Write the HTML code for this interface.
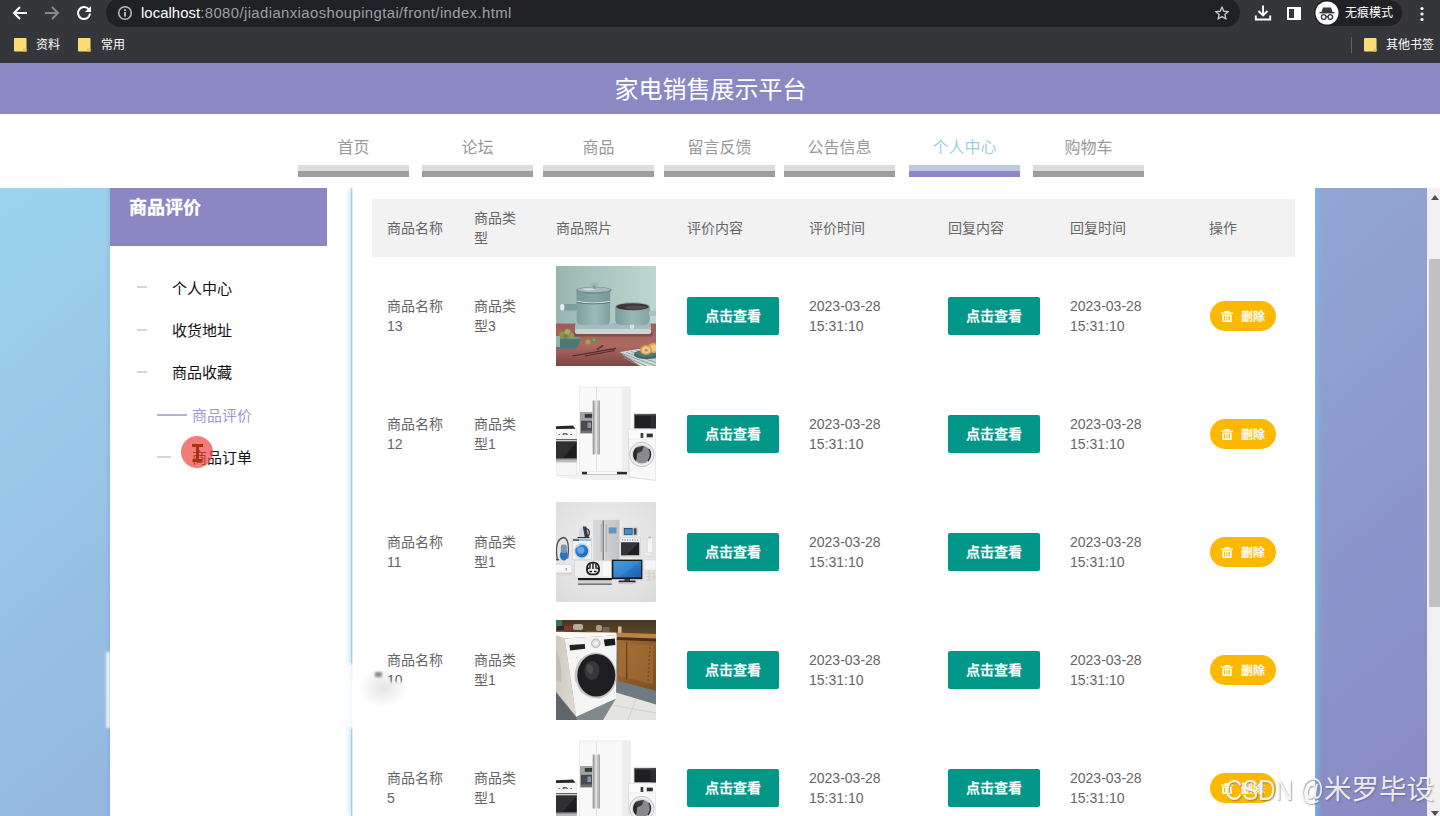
<!DOCTYPE html>
<html lang="zh-CN"><head><meta charset="utf-8"><title>家电销售展示平台</title>
<style>
*{box-sizing:border-box;margin:0;padding:0}
html,body{width:1440px;height:816px;overflow:hidden;background:#fff}
body{position:relative;font-family:"Liberation Sans","Noto Sans CJK SC",sans-serif;color:#666;font-size:14px}
.abs{position:absolute}
/* browser chrome */
#chrome{position:absolute;left:0;top:0;width:1440px;height:63px;background:#35363a;color:#fff}
#pill{position:absolute;left:106px;top:-2px;width:1134px;height:29px;border-radius:15px;background:#202124}
#url{position:absolute;left:141px;top:3px;height:20px;line-height:20px;font-size:14.9px;color:#9aa0a6;white-space:nowrap;letter-spacing:0px}
#url b{font-weight:normal;color:#fff;letter-spacing:0.05px}
#url i{font-style:normal;letter-spacing:0.39px}
.bm{position:absolute;top:36px;height:18px;line-height:18px;font-size:12px;color:#fff;white-space:nowrap}
#incog{position:absolute;left:1314px;top:0px;width:88px;height:26px;border-radius:13px;background:#202124}
#incog span{position:absolute;left:31px;top:4px;height:18px;line-height:18px;font-size:12px;color:#fff;white-space:nowrap}
/* header */
#hdr{position:absolute;left:0;top:63px;width:1440px;height:51px;background:#8a89c3;color:#fff;font-size:24px;line-height:51px;text-align:center}
#hdr span{position:absolute;left:614px;top:1px;width:193px;white-space:nowrap}
/* nav */
.nav{position:absolute;top:135px;width:111px;height:26px;line-height:26px;text-align:center;font-size:16px;color:#999;white-space:nowrap}
.bar{position:absolute;top:165px;width:111px;height:12px;background:linear-gradient(#dcdcdc 0,#dcdcdc 50%,#9e9e9e 50%,#9e9e9e 100%)}
.bar.on{background:linear-gradient(#bccadd 0,#bccadd 50%,#8c88c9 50%,#8c88c9 100%)}
/* frame */
#frame{position:absolute;left:0;top:188px;width:1427px;height:628px;background:linear-gradient(140deg,#9cd4ee,#8989c4);overflow:hidden}
#main{position:absolute;left:110px;top:0;width:1205px;height:628px;background:#fff}
#content{position:absolute;left:241px;top:0;width:964px;height:628px;border-left:1px solid #a3d1f1;box-shadow:-3px 0 4px -1px rgba(150,205,240,.5),inset 1px 0 0 rgba(163,209,241,.4)}
#sidehead{position:absolute;left:0;top:0;width:217px;-webkit-text-stroke:.3px #fff;height:58px;background:#8a87c2;color:#fff;font-weight:bold;font-size:18px;line-height:24px;padding:8px 0 0 19px}
.mi{position:absolute;left:62px;height:22px;line-height:22px;font-size:15px;color:#111;white-space:nowrap}
.dash{position:absolute;height:2px;background:#d6d6d6}
/* scrollbar */
#sb{position:absolute;left:1427px;top:188px;width:13px;height:628px;background:#f1f1f1}
#sb i{position:absolute;left:2px;top:71px;width:11px;height:348px;background:#c1c1c1}
/* table */
#th{position:absolute;left:372px;top:199px;width:923px;height:58px;background:#f2f2f2}
.t{position:absolute;line-height:20px;font-size:14px;color:#666;white-space:nowrap}
.btn{position:absolute;width:92px;height:38px;border-radius:2px;background:#009688;color:#fff;font-size:14px;text-align:center;font-weight:500;-webkit-text-stroke:.3px #fff;line-height:39px}
.del{position:absolute;width:66px;height:30px;border-radius:15px;background:#ffb800;color:#fff;font-size:12px;font-weight:bold;line-height:30px}
.del span{position:absolute;left:31px;top:1px}
.del svg{position:absolute;left:11px;top:10px}
.img{position:absolute;left:556px;width:100px;height:100px;overflow:hidden}
#wm{position:absolute;left:1225px;top:772px;font-size:27.5px;line-height:36px;color:rgba(255,255,255,.86);white-space:nowrap;text-shadow:1px 1px 1.5px rgba(90,90,100,.6)}
#wm b{font-weight:normal;display:inline-block;font-size:30px;transform-origin:0 50%;transform:scaleX(.8);width:99px;vertical-align:top}
#cursor{position:absolute;left:181px;top:436px;width:32px;height:32px;border-radius:16px;background:rgba(238,72,72,.72)}
#smudge{position:absolute;left:352px;top:682px;width:54px;height:46px;background:#fff;filter:blur(1.5px)}
#smudge2{position:absolute;left:358px;top:668px;width:50px;height:40px;background:radial-gradient(closest-side,rgba(0,0,0,.10),rgba(0,0,0,0))}
#smudge3{position:absolute;left:375px;top:672px;width:7px;height:5px;background:#8c8c8c;filter:blur(1px)}
#smudge4{position:absolute;left:346px;top:664px;width:8px;height:64px;background:rgba(255,255,255,.75);filter:blur(1px)}
#smudge5{position:absolute;left:106px;top:652px;width:4px;height:76px;background:rgba(255,255,255,.8);filter:blur(1px)}
</style></head>
<body>
<div id="chrome">
<div id="pill"></div>
<svg class="abs" style="left:12px;top:5px" width="16" height="16" viewBox="0 0 16 16"><path d="M15 8 H2.500 M8 2 L2 8 L8 14" fill="none" stroke="#fff" stroke-width="2" stroke-linecap="butt"/></svg>
<svg class="abs" style="left:44px;top:5px" width="16" height="16" viewBox="0 0 16 16"><path d="M1 8 H13.500 M8 2 L14 8 L8 14" fill="none" stroke="#88898c" stroke-width="2"/></svg>
<svg class="abs" style="left:76px;top:5px" width="16" height="16" viewBox="0 0 16 16"><path d="M13.300 5.200 A6 6 0 1 0 14 8.500" fill="none" stroke="#fff" stroke-width="2"/><path d="M15 1 V7 H9z" fill="#fff"/></svg>
<svg class="abs" style="left:117px;top:5px" width="16" height="16" viewBox="0 0 16 16"><circle cx="8" cy="8" r="6.300" fill="none" stroke="#b4b8bd" stroke-width="1.600"/><rect x="7.100" y="7" width="1.800" height="4.600" fill="#c4c7cb"/><rect x="7.100" y="4.200" width="1.800" height="1.800" fill="#c4c7cb"/></svg>
<div id="url"><b>localhost</b><i>:8080/jiadianxiaoshoupingtai/front/index.html</i></div>
<svg class="abs" style="left:1214px;top:5px" width="16" height="16" viewBox="0 0 18 18"><path d="M9 2.200 L11 7 L16.200 7.400 L12.200 10.800 L13.500 15.800 L9 13.100 L4.500 15.800 L5.800 10.800 L1.800 7.400 L7 7z" fill="none" stroke="#c9cbce" stroke-width="1.500" stroke-linejoin="round"/></svg>
<svg class="abs" style="left:1254px;top:4px" width="18" height="18" viewBox="0 0 18 18"><path d="M9 1.500 V11 M4.500 7 L9 11.500 L13.500 7 M1.800 11.500 V15.500 H16.200 V11.500" fill="none" stroke="#fff" stroke-width="1.900"/></svg>
<svg class="abs" style="left:1287px;top:7px" width="14" height="13" viewBox="0 0 14 13"><rect x="1" y="1" width="12" height="11" fill="#35363a" stroke="#fff" stroke-width="2"/><rect x="7" y="1" width="6" height="11" fill="#fff"/></svg>
<div id="incog"><svg class="abs" style="left:1px;top:1px" width="24" height="24" viewBox="0 0 24 24"><circle cx="12" cy="12" r="11.500" fill="#fff"/><path d="M8 6.500 h8 l1.500 4.500 h-11z" fill="#35363a"/><rect x="4.500" y="11" width="15" height="1.400" fill="#35363a"/><circle cx="8.700" cy="16" r="2.300" fill="none" stroke="#35363a" stroke-width="1.300"/><circle cx="15.300" cy="16" r="2.300" fill="none" stroke="#35363a" stroke-width="1.300"/><path d="M11 15.700 h2" stroke="#35363a" stroke-width="1.200"/></svg><span>无痕模式</span></div>
<svg class="abs" style="left:1419px;top:6px" width="6" height="16" viewBox="0 0 6 16"><circle cx="3" cy="2.500" r="1.600" fill="#fff"/><circle cx="3" cy="8" r="1.600" fill="#fff"/><circle cx="3" cy="13.500" r="1.600" fill="#fff"/></svg>
<svg class="abs" style="left:14px;top:38px" width="13" height="14" viewBox="0 0 13 14"><path d="M1 0 H11.500 Q12.500 0 12.500 1 V13.500 H1 Q0 13.500 0 12.500 V1 Q0 0 1 0z" fill="#fbdd78"/><path d="M9 13.500 V10.500 H12.500 V13.500z" fill="#e9c659"/></svg><div class="bm" style="left:36px">资料</div>
<svg class="abs" style="left:78px;top:38px" width="13" height="14" viewBox="0 0 13 14"><path d="M1 0 H11.500 Q12.500 0 12.500 1 V13.500 H1 Q0 13.500 0 12.500 V1 Q0 0 1 0z" fill="#fbdd78"/><path d="M9 13.500 V10.500 H12.500 V13.500z" fill="#e9c659"/></svg><div class="bm" style="left:101px">常用</div>
<div class="abs" style="left:1351px;top:37px;width:1px;height:16px;background:#5f6368"></div>
<svg class="abs" style="left:1364px;top:38px" width="13" height="14" viewBox="0 0 13 14"><path d="M1 0 H11.500 Q12.500 0 12.500 1 V13.500 H1 Q0 13.500 0 12.500 V1 Q0 0 1 0z" fill="#fbdd78"/><path d="M9 13.500 V10.500 H12.500 V13.500z" fill="#e9c659"/></svg><div class="bm" style="left:1386px">其他书签</div>
</div>
<div id="hdr"><span>家电销售展示平台</span></div>
<div class="nav" style="left:298px">首页</div><div class="bar" style="left:298px"></div>
<div class="nav" style="left:422px">论坛</div><div class="bar" style="left:422px"></div>
<div class="nav" style="left:543px">商品</div><div class="bar" style="left:543px"></div>
<div class="nav" style="left:664px">留言反馈</div><div class="bar" style="left:664px"></div>
<div class="nav" style="left:784px">公告信息</div><div class="bar" style="left:784px"></div>
<div class="nav" style="left:909px;color:#9dcfe9">个人中心</div><div class="bar on" style="left:909px"></div>
<div class="nav" style="left:1033px">购物车</div><div class="bar" style="left:1033px"></div>
<div id="frame"><div id="main">
<div id="sidehead">商品评价</div>
<div class="dash" style="left:27px;top:98px;width:10px"></div><div class="mi" style="top:90px">个人中心</div>
<div class="dash" style="left:27px;top:141px;width:10px"></div><div class="mi" style="top:132px">收货地址</div>
<div class="dash" style="left:27px;top:183px;width:10px"></div><div class="mi" style="top:174px">商品收藏</div>
<div class="dash" style="left:47px;top:226px;width:30px;height:2px;background:#b4b1db"></div><div class="mi" style="left:82px;top:217px;color:#9c9ad0">商品评价</div>
<div class="dash" style="left:47px;top:268px;width:14px"></div><div class="mi" style="left:82px;top:259px">商品订单</div>
<div id="content"></div>
<div class="abs" style="left:1205px;top:0;width:7px;height:628px;background:linear-gradient(to right,rgba(118,186,236,.85),rgba(118,186,236,.35) 45%,rgba(118,186,236,0))"></div><div class="abs" style="left:-5px;top:0;width:5px;height:628px;background:linear-gradient(to right,rgba(70,120,160,0),rgba(70,120,160,.13))"></div>
</div></div>
<div id="sb"><i></i><svg class="abs" style="left:4px;top:7px" width="8" height="5" viewBox="0 0 8 5"><path d="M0 5 L4 0 L8 5z" fill="#505050"/></svg><svg class="abs" style="left:4px;top:623px" width="8" height="5" viewBox="0 0 8 5"><path d="M0 0 L4 5 L8 0z" fill="#505050"/></svg></div>
<div id="th"></div>
<div class="t" style="left:387px;top:218px">商品名称</div>
<div class="t" style="left:474px;top:208px">商品类<br>型</div>
<div class="t" style="left:556px;top:218px">商品照片</div>
<div class="t" style="left:687px;top:218px">评价内容</div>
<div class="t" style="left:809px;top:218px">评价时间</div>
<div class="t" style="left:948px;top:218px">回复内容</div>
<div class="t" style="left:1070px;top:218px">回复时间</div>
<div class="t" style="left:1209px;top:218px">操作</div>
<div class="t" style="left:387px;top:296px">商品名称<br>13</div><div class="t" style="left:474px;top:296px">商品类<br>型3</div><div class="img" style="top:266px"><svg viewBox="0 0 100 100" width="100" height="100">
<defs><linearGradient id="g1a" x1="0" x2="1"><stop offset="0" stop-color="#97b4af"/><stop offset=".25" stop-color="#a3c0ba"/><stop offset="1" stop-color="#bed6d0"/></linearGradient>
<linearGradient id="g1b" x1="0" x2="0" y1="0" y2="1"><stop offset="0" stop-color="#9d5b55"/><stop offset=".5" stop-color="#ae6a61"/><stop offset="1" stop-color="#7d4541"/></linearGradient>
<linearGradient id="g1c" x1="0" x2="1"><stop offset="0" stop-color="#7f9fa0"/><stop offset=".55" stop-color="#9bbab8"/><stop offset="1" stop-color="#7f9e9f"/></linearGradient>
<linearGradient id="g1d" x1="0" x2="1"><stop offset="0" stop-color="#7b9a9b"/><stop offset=".5" stop-color="#98b7b5"/><stop offset="1" stop-color="#84a3a3"/></linearGradient></defs>
<rect width="100" height="100" fill="url(#g1a)"/>
<rect y="57.600" width="100" height="42.400" fill="url(#g1b)"/>
<rect x="17" y="66" width="80" height="4.500" rx="2" fill="#7a423e" opacity=".7"/>
<rect x="19" y="57" width="76" height="11" rx="3" fill="#a7babd"/>
<rect x="19" y="63" width="76" height="5" rx="2.500" fill="#c9d5d6"/>
<rect x="6" y="38" width="16" height="6.500" rx="3" fill="#7d9c9c"/><rect x="4.200" y="38" width="4.200" height="6.500" rx="2" fill="#e6ecea"/>
<path d="M20.600 25 h33.500 v28.500 q0 5.500 -5.500 5.500 h-22.500 q-5.500 0 -5.500 -5.500z" fill="url(#g1c)"/>
<path d="M20.600 25 h33.500 v10.500 q-16.700 3 -33.500 0z" fill="#6f9091" opacity=".45"/>
<path d="M20.600 34.800 q16.700 3.200 33.500 0 v1 q-16.700 3.200 -33.500 0z" fill="#d3dedc"/>
<path d="M20.600 35.900 q16.700 3.200 33.500 0 v.8 q-16.700 3.200 -33.500 0z" fill="#4f6c6e"/>
<ellipse cx="38" cy="24.300" rx="17.800" ry="3.500" fill="#6f8d8c"/><ellipse cx="38" cy="23.700" rx="16" ry="2.500" fill="#a5bdb9"/><ellipse cx="33" cy="23.300" rx="6" ry="1.100" fill="#d5e2df" opacity=".8"/>
<rect x="35" y="16.500" width="6.700" height="4" rx="2" fill="#9bb7b3"/><rect x="37.200" y="19.500" width="2.400" height="3.200" fill="#7e9b99"/>
<path d="M59.200 40.500 h34.600 v12.800 q0 5.700 -5.700 5.700 h-23.200 q-5.700 0 -5.700 -5.700z" fill="url(#g1d)"/>
<ellipse cx="76.500" cy="40.500" rx="17.300" ry="4.200" fill="#8eadac"/><ellipse cx="76.500" cy="40.700" rx="16.300" ry="3.500" fill="#3e3539"/><ellipse cx="80" cy="41.600" rx="11" ry="2" fill="#55494c"/>
<rect x="93" y="44.700" width="9" height="5.300" rx="2.600" fill="#a9c2c0"/>
<circle cx="76" cy="60.700" r="2.100" fill="#e9efef"/><circle cx="76" cy="60.700" r="1.100" fill="#c6d0d1"/>
<path d="M0 72 h23 q2 0 1.400 1.800 l-2.200 6.500 q-.8 2.400 -3.500 2.400 h-18.700z" fill="#4c7974"/><path d="M0 71 h23.500 q1.500 .2 1 1.800 h-24.500z" fill="#6e9b95"/><rect x="0" y="70" width="4" height="11" fill="#92b4ae"/>
<circle cx="6.100" cy="68.600" r="3" fill="#87964f"/><circle cx="11.600" cy="66" r="3.100" fill="#a1ab66"/><circle cx="15.300" cy="69.800" r="3" fill="#8e9b56"/><circle cx="9.500" cy="70.500" r="2.400" fill="#76863f"/>
<circle cx="38.600" cy="74.500" r="3" fill="#728b4b"/><circle cx="37.800" cy="73.700" r="1.300" fill="#93a667"/><circle cx="32" cy="76" r="2.500" fill="#a89d5a"/>
<path d="M16.500 90 L60 82.400 M28.800 90 L58.800 84.500" stroke="#4a2f2a" stroke-width="1.200" fill="none"/><path d="M41 83.500 L47 79.500" stroke="#5a3a33" stroke-width="1.600"/>
<path d="M63.700 86 L82 83 L100 84 V100 H84z" fill="#d2d8d8"/>
<path d="M66 87.500 L100 100 M70 86.500 L100 96.500 M75 85.500 L100 93 M80 84.500 L100 89.500 M66 89 L90 100 M68 91.500 L84 100" stroke="#8b9a9a" stroke-width=".9"/>
<ellipse cx="90.500" cy="88.500" rx="12.500" ry="4.600" fill="#3d625f"/><ellipse cx="90.500" cy="87.600" rx="11" ry="3.600" fill="#4d7672"/>
<ellipse cx="97.400" cy="82" rx="5.500" ry="5" fill="#dca860"/><ellipse cx="97.400" cy="82" rx="3.400" ry="3" fill="#ecc888"/>
<ellipse cx="90" cy="84" rx="6" ry="5" fill="#d59c52"/><ellipse cx="90" cy="84" rx="4.300" ry="3.500" fill="#edca8a"/><ellipse cx="90.200" cy="84.200" rx="1.600" ry="1.300" fill="#c08a48"/>
</svg></div><div class="btn" style="left:687px;top:297px">点击查看</div><div class="t" style="left:809px;top:296px">2023-03-28<br>15:31:10</div><div class="btn" style="left:948px;top:297px">点击查看</div><div class="t" style="left:1070px;top:296px">2023-03-28<br>15:31:10</div><div class="del" style="left:1210px;top:301px"><svg width="12" height="11" viewBox="0 0 12 11"><path d="M0 1.600 H12 V2.800 H0z M3.500 0 H8.500 V1.600 H3.500z" fill="#fff"/><path d="M1.300 3.600 H10.700 V10.200 Q10.700 11 9.900 11 H2.100 Q1.300 11 1.300 10.200z" fill="#fff"/><path d="M3.600 4.800 V9.600 M6 4.800 V9.600 M8.400 4.800 V9.600" stroke="#ffb800" stroke-width="1.100"/></svg><span>删除</span></div>
<div class="t" style="left:387px;top:414px">商品名称<br>12</div><div class="t" style="left:474px;top:414px">商品类<br>型1</div><div class="img" style="top:384px"><svg viewBox="0 0 100 100" width="100" height="100">
<rect width="100" height="100" fill="#fff"/>
<ellipse cx="48" cy="91.500" rx="46" ry="4.500" fill="#f1f1f1"/>
<rect x="26" y="86.400" width="45" height="4" fill="#2c2c2e"/><rect x="31" y="86.400" width="30" height="4" fill="#fafafa"/>
<rect x="23.300" y="3" width="50.800" height="84.500" fill="#f9f9f9"/>
<rect x="66" y="3" width="8.100" height="84.500" fill="#eeeeee"/>
<rect x="23.300" y="3" width="50.800" height="84.500" fill="none" stroke="#e2e2e2" stroke-width=".6"/>
<rect x="40.100" y="3" width=".7" height="84.500" fill="#d6d6d6"/>
<rect x="36.800" y="16.500" width="2.700" height="54" rx="1" fill="#b9b9b9"/><rect x="36.800" y="16.500" width=".8" height="54" fill="#8f8f8f"/>
<rect x="41" y="16.500" width="2.700" height="54" rx="1" fill="#c2c2c2"/><rect x="42.900" y="16.500" width=".8" height="54" fill="#939393"/>
<rect x="24" y="28" width="12.400" height="21.600" fill="#a3a3a3"/><rect x="25" y="36.800" width="11" height="12.200" fill="#4a4a4c"/><rect x="28.800" y="30" width="7.300" height="3.800" fill="#39393b"/><rect x="31.500" y="38.500" width="3.600" height="5.500" fill="#8496ad"/><rect x="25" y="46.500" width="11" height="2.500" fill="#6e6e70"/>
<rect x="0" y="44.700" width="20.800" height="46.600" fill="#f6f6f6" stroke="#dedede" stroke-width=".5"/>
<path d="M0 42.300 L17 41.600 L19.500 44.700 L0 45z" fill="#29292b"/>
<path d="M2.500 50.500 h16" stroke="#6f6f72" stroke-width="1.100" stroke-dasharray="1.600 2.400"/><rect x="7" y="49.200" width="4" height="1.200" fill="#444"/>
<rect x="0" y="55" width="20.800" height="19.800" fill="#1d1d1f"/><rect x="0" y="55.600" width="20.800" height="1.800" fill="#cfcfcf"/><path d="M0 58 h20.800 L6 74.800 h-6z" fill="#38383b" opacity=".7"/>
<rect x="0" y="74.800" width="20.800" height="3.600" fill="#b9b9b9"/><rect x="0" y="74.800" width="20.800" height="1" fill="#8d8d8d"/>
<rect x="77.200" y="28.800" width="22.800" height="16.500" fill="#e6e6e6"/><rect x="78.400" y="30.400" width="21.600" height="14" fill="#1f1f21"/><rect x="94.500" y="30.400" width="5.500" height="14" fill="#2e2e30"/><rect x="78.400" y="30.400" width="21.600" height="1.200" fill="#4a4a4c"/>
<path d="M72.300 45.300 H100 V96.500 L73.200 93z" fill="#f8f8f8" stroke="#d3d3d3" stroke-width=".7"/>
<path d="M72.300 45.300 H100 V55 H72.600z" fill="#fcfcfc" stroke="#dcdcdc" stroke-width=".5"/>
<rect x="84.600" y="49" width="2.700" height="5" fill="#3c3c3e"/><rect x="90.700" y="49.600" width="6.100" height="3.700" fill="#2f2f31"/>
<circle cx="85.800" cy="70.500" r="12.200" fill="#efefef" stroke="#c4c4c4" stroke-width="1"/><circle cx="85.800" cy="70.500" r="10" fill="#d9d9d9"/>
<circle cx="85.800" cy="70.500" r="8.800" fill="#8a8a8e"/><path d="M80.500 63.500 a8.800 8.800 0 0 0 -.5 13.500 q2 -7 .5 -13.500z" fill="#29292b"/><path d="M80 63.800 L88 62 L86 67 L80.500 70z" fill="#3a3a3c"/><path d="M93 65 q3.500 6 -1 12" stroke="#2d2d2f" stroke-width="1.400" fill="none"/>
</svg></div><div class="btn" style="left:687px;top:415px">点击查看</div><div class="t" style="left:809px;top:414px">2023-03-28<br>15:31:10</div><div class="btn" style="left:948px;top:415px">点击查看</div><div class="t" style="left:1070px;top:414px">2023-03-28<br>15:31:10</div><div class="del" style="left:1210px;top:419px"><svg width="12" height="11" viewBox="0 0 12 11"><path d="M0 1.600 H12 V2.800 H0z M3.500 0 H8.500 V1.600 H3.500z" fill="#fff"/><path d="M1.300 3.600 H10.700 V10.200 Q10.700 11 9.900 11 H2.100 Q1.300 11 1.300 10.200z" fill="#fff"/><path d="M3.600 4.800 V9.600 M6 4.800 V9.600 M8.400 4.800 V9.600" stroke="#ffb800" stroke-width="1.100"/></svg><span>删除</span></div>
<div class="t" style="left:387px;top:532px">商品名称<br>11</div><div class="t" style="left:474px;top:532px">商品类<br>型1</div><div class="img" style="top:502px"><svg viewBox="0 0 100 100" width="100" height="100">
<defs><radialGradient id="g3" cx=".5" cy=".42" r=".72"><stop offset="0" stop-color="#f1f1f1"/><stop offset="1" stop-color="#dcdcdc"/></radialGradient>
<linearGradient id="g3b" x1="0" x2="1" y1="0" y2="1"><stop offset="0" stop-color="#3f95e0"/><stop offset="1" stop-color="#1b5fae"/></linearGradient>
<linearGradient id="g3c" x1="0" x2="1"><stop offset="0" stop-color="#d9dadb"/><stop offset="1" stop-color="#c2c3c5"/></linearGradient></defs>
<rect width="100" height="100" fill="url(#g3)"/>
<rect x="37.100" y="16.900" width="26.400" height="43.100" fill="url(#g3c)"/><rect x="37.100" y="16.900" width="26.400" height="1" fill="#e9e9ea"/><rect x="46.600" y="18.500" width="1.500" height="40" fill="#7e7f82"/><rect x="48.100" y="18.500" width=".8" height="40" fill="#e4e4e5"/><rect x="44.800" y="22" width=".9" height="28" fill="#a9aaad"/><rect x="49.700" y="22" width=".9" height="28" fill="#a9aaad"/>
<rect x="52.600" y="25.300" width="8" height="6.300" fill="#8f9296"/><rect x="53.500" y="26.200" width="6.200" height="4.400" fill="#4d9ada"/>
<path d="M24 25.500 h6.500 l2 10 h-10.500z" fill="#d3d7db"/><path d="M26.800 24.500 h3.500 l2.200 11 h-3.700z" fill="#3a3e45"/><path d="M30.500 26.500 q4.500 1.500 1.800 8" stroke="#2f3238" stroke-width="1.300" fill="none"/><rect x="21.500" y="35" width="12" height="1.400" fill="#2f3238"/>
<rect x="16.500" y="36.500" width="19" height="21.200" fill="#f5f5f6" stroke="#c6c6c8" stroke-width=".5"/><rect x="17" y="37" width="18" height="2" fill="#8ec4ea"/><rect x="17" y="37" width="6" height="2" fill="#5d6a78"/>
<circle cx="25.700" cy="49" r="8" fill="#d4d9df"/><circle cx="25.700" cy="49" r="6.500" fill="url(#g3b)"/><circle cx="25" cy="48.300" r="3.400" fill="#79b9f2" opacity=".75"/><path d="M21 46 a6 6 0 0 1 6 -3.500" stroke="#9ccdf5" stroke-width="1.200" fill="none"/>
<path d="M1.200 57 q-3 -20 6.500 -21.500 q6.500 1 4 21" fill="none" stroke="#4a4f58" stroke-width="1.300"/><ellipse cx="7.800" cy="53.300" rx="3.900" ry="5.200" fill="#2a72c4"/><rect x="4.800" y="42.500" width="6" height="8.500" rx="2.200" fill="#7c95ac"/><rect x="0" y="57" width="3" height="1.400" fill="#444"/>
<rect x="66.800" y="25.100" width="14.700" height="8.600" fill="#eaeaea" stroke="#b5b5b7" stroke-width=".4"/><rect x="67.800" y="26" width="8.800" height="6.800" fill="#2f3a46"/><rect x="68.500" y="26.700" width="7.400" height="5.400" fill="#3f8fd8"/><rect x="77.600" y="26.200" width="3" height="6.500" fill="#4a4a4c"/>
<rect x="64" y="35.500" width="20.600" height="19" fill="#f4f4f5" stroke="#c2c2c4" stroke-width=".5"/><path d="M66 38 h17" stroke="#7f9db8" stroke-width="1.400" stroke-dasharray="1.200 1.300"/><rect x="65" y="40.400" width="18.300" height="12.900" fill="#1f1f23"/><path d="M65 40.400 h18.300 L70 53.300 h-5z" fill="#3a3a40" opacity=".8"/>
<rect x="91.300" y="35.500" width="9" height="19" rx="1.500" fill="#f6f6f6" stroke="#cfcfcf" stroke-width=".5"/><rect x="96" y="36" width="4" height="18" fill="#e3e3e3"/><rect x="92.500" y="34.500" width="2.500" height="2" fill="#b8b8b8"/><rect x="88" y="50.500" width="8" height="3.500" fill="#ececec" stroke="#d0d0d0" stroke-width=".4"/>
<rect x="-1" y="62.500" width="17" height="11" rx="2.500" fill="#f8f8f8" stroke="#cdcdcd" stroke-width=".5"/><rect x="-1" y="70.500" width="17" height="2.200" fill="#d2d2d4"/><rect x="9.500" y="66" width="1.500" height="2.500" fill="#9aa"/>
<rect x="18.400" y="58.200" width="37.400" height="17.800" fill="#eeeeef" stroke="#c9c9cb" stroke-width=".5"/><rect x="47" y="60" width="8" height="14" fill="#f9f9f9"/>
<path d="M31 66.500 q0 -6 6 -5.800 q6 -.2 6 5.800 q.5 5 -3.500 5.800 h-5 q-4 -.8 -3.500 -5.800z" fill="none" stroke="#1c1c1e" stroke-width="1.700"/><path d="M34 62 v4 q-3 0 -3 2 M37 61 v6 M40 62 v4 q3 0 3 2 M33.500 69.500 h2.500 M38 69.500 h2.500" stroke="#1c1c1e" stroke-width="1.400" fill="none"/>
<rect x="22" y="76" width="33.800" height="2.400" fill="#1a1a1c"/><rect x="22" y="78.400" width="33.800" height="4.300" fill="#d0d1d3"/><rect x="22" y="81.600" width="33.800" height="1.100" fill="#4e4e50"/>
<rect x="55.800" y="57.600" width="30.600" height="19.600" fill="#18191c"/><rect x="57.400" y="59" width="27.800" height="16.400" fill="url(#g3b)"/><path d="M57.400 59 h27.800 L62 75.400 h-4.600z" fill="#5fb0f0" opacity=".22"/>
<rect x="68.500" y="77.200" width="5.500" height="1.600" fill="#222"/><rect x="62.500" y="78.600" width="17.200" height="1.800" rx=".9" fill="#2a2a2c"/><ellipse cx="71" cy="81.200" rx="9" ry="1" fill="#c9c9c9"/>
<rect x="88" y="58" width="12" height="10" fill="#f5f5f5" stroke="#d4d4d4" stroke-width=".4"/><path d="M89 71 h10 M91 75 h9 M90 78 h6 M93 68 v11 M98 69 v9" stroke="#cfcfd0" stroke-width="1"/>
</svg></div><div class="btn" style="left:687px;top:533px">点击查看</div><div class="t" style="left:809px;top:532px">2023-03-28<br>15:31:10</div><div class="btn" style="left:948px;top:533px">点击查看</div><div class="t" style="left:1070px;top:532px">2023-03-28<br>15:31:10</div><div class="del" style="left:1210px;top:537px"><svg width="12" height="11" viewBox="0 0 12 11"><path d="M0 1.600 H12 V2.800 H0z M3.500 0 H8.500 V1.600 H3.500z" fill="#fff"/><path d="M1.300 3.600 H10.700 V10.200 Q10.700 11 9.900 11 H2.100 Q1.300 11 1.300 10.200z" fill="#fff"/><path d="M3.600 4.800 V9.600 M6 4.800 V9.600 M8.400 4.800 V9.600" stroke="#ffb800" stroke-width="1.100"/></svg><span>删除</span></div>
<div class="t" style="left:387px;top:650px">商品名称<br>10</div><div class="t" style="left:474px;top:650px">商品类<br>型1</div><div class="img" style="top:620px"><svg viewBox="0 0 100 100" width="100" height="100">
<defs><linearGradient id="g4a" x1="0" x2="1" y1="0" y2="1"><stop offset="0" stop-color="#a06c30"/><stop offset="1" stop-color="#7a4e22"/></linearGradient>
<linearGradient id="g4b" x1="0" x2="1"><stop offset="0" stop-color="#cfcabf"/><stop offset="1" stop-color="#dedbd3"/></linearGradient>
<linearGradient id="g4c" x1="0" x2="0" y1="0" y2="1"><stop offset="0" stop-color="#463622"/><stop offset="1" stop-color="#5e4727"/></linearGradient></defs>
<rect width="100" height="100" fill="#737d82"/>
<rect width="100" height="15" fill="url(#g4c)"/>
<rect x="0" y="0" width="6" height="8.500" fill="#3d6d5c"/><rect x="1" y="6" width="7" height="4" fill="#2a2a2a"/><rect x="8" y="6" width="8.500" height="4.200" fill="#8e3038"/><rect x="17" y="4" width="10" height="6" rx="2" fill="#b4ab98"/><rect x="40" y="5" width="6" height="6" rx="2" fill="#a89f86"/><rect x="46.500" y="7" width="7" height="5" fill="#6b675a"/><rect x="62" y="6.500" width="3.600" height="6.500" fill="#cdbd98"/>
<path d="M30 11.500 L100 14 V18.800 L56 17z" fill="#bb8444"/><path d="M58 17 L100 18.600 V22 L60 20.500z" fill="#4a3016"/>
<path d="M61 20 L100 21.500 V71 L61.500 61z" fill="url(#g4a)"/>
<path d="M63 23.500 L69.800 24 V57.500 L63 56z M72 24 L97 26 V64.500 L72 58z" fill="#a9733a" opacity=".55"/>
<path d="M70.600 22 V59.500" stroke="#5c3a18" stroke-width=".9"/><path d="M94 27 L92 62" stroke="#6a4520" stroke-width="1.600" stroke-dasharray="2 2" opacity=".7"/>
<path d="M61.500 61 L100 71 V84.500 L60 72.500z" fill="#6e7b83"/>
<path d="M60 72.500 L100 84.500 V100 H44z" fill="#e4e4e0"/><path d="M56 85 L100 93 M80 79 L72 100" stroke="#cdcdc8" stroke-width=".8"/>
<path d="M0 70 L20.200 96.800 L22 100 H0z" fill="#5e6669"/><path d="M20.200 96.800 L60 78.400 L47 100 H21z" fill="#81888a"/>
<path d="M0 15.500 L8.600 18.400 L20.200 96.800 L0 72z" fill="url(#g4b)"/><path d="M0 30 Q7 45 5 62 L0 60z" fill="#bdb7ab" opacity=".7"/>
<path d="M0 11.800 L60 12.800 L60.700 15.300 L8.600 18.400 L0 15.500z" fill="#fbfbfa"/>
<path d="M8.600 18.400 L60.700 15.300 L60 78.400 L20.200 96.800z" fill="#f5f5f4"/>
<ellipse cx="39.600" cy="55.800" rx="21" ry="23.300" fill="#c4c4c4"/><path d="M19.500 62 q4 17 22 17" stroke="#f2f2f2" stroke-width="1.500" fill="none"/>
<ellipse cx="40.300" cy="55.300" rx="19" ry="21.300" fill="#1e1e20"/><ellipse cx="36" cy="50.500" rx="7.500" ry="9.500" fill="#38383c"/><ellipse cx="34" cy="49" rx="3" ry="5" fill="#4b4b50" transform="rotate(-20 34 49)"/>
<path d="M13.500 25.100 L28.800 23.900 L29.200 28.800 L14.100 30.600z" fill="#232325"/>
<path d="M47.800 19.600 L58.800 18.400 L59.400 25.100 L49 26.300z" fill="#1b1b1d"/>
<circle cx="39.800" cy="23.300" r="4.300" fill="#dcdcdc" stroke="#b4b4b4" stroke-width="1"/><circle cx="39.800" cy="23.300" r="2" fill="#f4f4f4"/>
</svg></div><div class="btn" style="left:687px;top:651px">点击查看</div><div class="t" style="left:809px;top:650px">2023-03-28<br>15:31:10</div><div class="btn" style="left:948px;top:651px">点击查看</div><div class="t" style="left:1070px;top:650px">2023-03-28<br>15:31:10</div><div class="del" style="left:1210px;top:655px"><svg width="12" height="11" viewBox="0 0 12 11"><path d="M0 1.600 H12 V2.800 H0z M3.500 0 H8.500 V1.600 H3.500z" fill="#fff"/><path d="M1.300 3.600 H10.700 V10.200 Q10.700 11 9.900 11 H2.100 Q1.300 11 1.300 10.200z" fill="#fff"/><path d="M3.600 4.800 V9.600 M6 4.800 V9.600 M8.400 4.800 V9.600" stroke="#ffb800" stroke-width="1.100"/></svg><span>删除</span></div>
<div class="t" style="left:387px;top:768px">商品名称<br>5</div><div class="t" style="left:474px;top:768px">商品类<br>型1</div><div class="img" style="top:738px"><svg viewBox="0 0 100 100" width="100" height="100">
<rect width="100" height="100" fill="#fff"/>
<ellipse cx="48" cy="91.500" rx="46" ry="4.500" fill="#f1f1f1"/>
<rect x="26" y="86.400" width="45" height="4" fill="#2c2c2e"/><rect x="31" y="86.400" width="30" height="4" fill="#fafafa"/>
<rect x="23.300" y="3" width="50.800" height="84.500" fill="#f9f9f9"/>
<rect x="66" y="3" width="8.100" height="84.500" fill="#eeeeee"/>
<rect x="23.300" y="3" width="50.800" height="84.500" fill="none" stroke="#e2e2e2" stroke-width=".6"/>
<rect x="40.100" y="3" width=".7" height="84.500" fill="#d6d6d6"/>
<rect x="36.800" y="16.500" width="2.700" height="54" rx="1" fill="#b9b9b9"/><rect x="36.800" y="16.500" width=".8" height="54" fill="#8f8f8f"/>
<rect x="41" y="16.500" width="2.700" height="54" rx="1" fill="#c2c2c2"/><rect x="42.900" y="16.500" width=".8" height="54" fill="#939393"/>
<rect x="24" y="28" width="12.400" height="21.600" fill="#a3a3a3"/><rect x="25" y="36.800" width="11" height="12.200" fill="#4a4a4c"/><rect x="28.800" y="30" width="7.300" height="3.800" fill="#39393b"/><rect x="31.500" y="38.500" width="3.600" height="5.500" fill="#8496ad"/><rect x="25" y="46.500" width="11" height="2.500" fill="#6e6e70"/>
<rect x="0" y="44.700" width="20.800" height="46.600" fill="#f6f6f6" stroke="#dedede" stroke-width=".5"/>
<path d="M0 42.300 L17 41.600 L19.500 44.700 L0 45z" fill="#29292b"/>
<path d="M2.500 50.500 h16" stroke="#6f6f72" stroke-width="1.100" stroke-dasharray="1.600 2.400"/><rect x="7" y="49.200" width="4" height="1.200" fill="#444"/>
<rect x="0" y="55" width="20.800" height="19.800" fill="#1d1d1f"/><rect x="0" y="55.600" width="20.800" height="1.800" fill="#cfcfcf"/><path d="M0 58 h20.800 L6 74.800 h-6z" fill="#38383b" opacity=".7"/>
<rect x="0" y="74.800" width="20.800" height="3.600" fill="#b9b9b9"/><rect x="0" y="74.800" width="20.800" height="1" fill="#8d8d8d"/>
<rect x="77.200" y="28.800" width="22.800" height="16.500" fill="#e6e6e6"/><rect x="78.400" y="30.400" width="21.600" height="14" fill="#1f1f21"/><rect x="94.500" y="30.400" width="5.500" height="14" fill="#2e2e30"/><rect x="78.400" y="30.400" width="21.600" height="1.200" fill="#4a4a4c"/>
<path d="M72.300 45.300 H100 V96.500 L73.200 93z" fill="#f8f8f8" stroke="#d3d3d3" stroke-width=".7"/>
<path d="M72.300 45.300 H100 V55 H72.600z" fill="#fcfcfc" stroke="#dcdcdc" stroke-width=".5"/>
<rect x="84.600" y="49" width="2.700" height="5" fill="#3c3c3e"/><rect x="90.700" y="49.600" width="6.100" height="3.700" fill="#2f2f31"/>
<circle cx="85.800" cy="70.500" r="12.200" fill="#efefef" stroke="#c4c4c4" stroke-width="1"/><circle cx="85.800" cy="70.500" r="10" fill="#d9d9d9"/>
<circle cx="85.800" cy="70.500" r="8.800" fill="#8a8a8e"/><path d="M80.500 63.500 a8.800 8.800 0 0 0 -.5 13.500 q2 -7 .5 -13.500z" fill="#29292b"/><path d="M80 63.800 L88 62 L86 67 L80.500 70z" fill="#3a3a3c"/><path d="M93 65 q3.500 6 -1 12" stroke="#2d2d2f" stroke-width="1.400" fill="none"/>
</svg></div><div class="btn" style="left:687px;top:769px">点击查看</div><div class="t" style="left:809px;top:768px">2023-03-28<br>15:31:10</div><div class="btn" style="left:948px;top:769px">点击查看</div><div class="t" style="left:1070px;top:768px">2023-03-28<br>15:31:10</div><div class="del" style="left:1210px;top:773px"><svg width="12" height="11" viewBox="0 0 12 11"><path d="M0 1.600 H12 V2.800 H0z M3.500 0 H8.500 V1.600 H3.500z" fill="#fff"/><path d="M1.300 3.600 H10.700 V10.200 Q10.700 11 9.900 11 H2.100 Q1.300 11 1.300 10.200z" fill="#fff"/><path d="M3.600 4.800 V9.600 M6 4.800 V9.600 M8.400 4.800 V9.600" stroke="#ffb800" stroke-width="1.100"/></svg><span>删除</span></div>
<div id="smudge"></div><div id="smudge2"></div><div id="smudge3"></div><div id="smudge4"></div><div id="smudge5"></div>
<div id="cursor"><svg class="abs" style="left:10px;top:8px" width="13" height="18" viewBox="0 0 13 18"><path d="M1 1.500 H12 M6.500 1.500 V16.500 M1.500 16.500 H11.500" stroke="#a5350f" stroke-width="3" fill="none"/></svg></div>
<div id="wm"><b>CSDN @</b>米罗毕设</div>
</body></html>
